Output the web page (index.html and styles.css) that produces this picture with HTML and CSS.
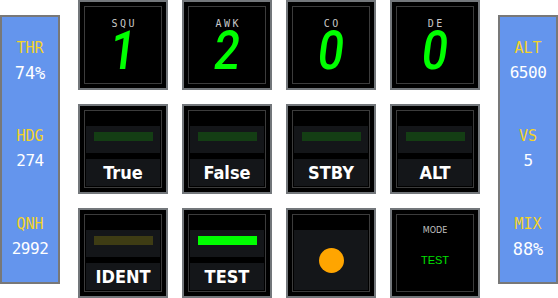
FILE: index.html
```html
<!DOCTYPE html>
<html lang="en">
<head>
    <meta charset="UTF-8">
    <meta name="viewport" content="width=device-width, initial-scale=1.0">
    <title>Transponder Panel</title>
    <link rel="stylesheet" href="styles.css">
</head>
<body>
    <div class="panel">
        <div class="readout"><span class="tag">THR</span><span class="val">74%</span></div>
        <div class="readout"><span class="tag">HDG</span><span class="val seg">274</span></div>
        <div class="readout"><span class="tag">QNH</span><span class="val seg">2992</span></div>
    </div>

    <div class="keys">
        <div class="key"><div class="face"><span class="cap">SQU</span><span class="digit">1</span></div></div>
        <div class="key"><div class="face"><span class="cap">AWK</span><span class="digit">2</span></div></div>
        <div class="key"><div class="face"><span class="cap">CO</span><span class="digit">0</span></div></div>
        <div class="key"><div class="face"><span class="cap">DE</span><span class="digit">0</span></div></div>

        <div class="key"><div class="face split"><div class="lamp"><span class="bar"></span></div><div class="label">True</div></div></div>
        <div class="key"><div class="face split"><div class="lamp"><span class="bar"></span></div><div class="label">False</div></div></div>
        <div class="key"><div class="face split"><div class="lamp"><span class="bar"></span></div><div class="label">STBY</div></div></div>
        <div class="key"><div class="face split"><div class="lamp"><span class="bar"></span></div><div class="label">ALT</div></div></div>

        <div class="key"><div class="face split"><div class="lamp"><span class="bar ident"></span></div><div class="label">IDENT</div></div></div>
        <div class="key"><div class="face split"><div class="lamp"><span class="bar on"></span></div><div class="label">TEST</div></div></div>
        <div class="key"><div class="face split"><div class="lamp tall"><span class="dot"></span></div></div></div>
        <div class="key"><div class="face mode"><span class="mode-cap">MODE</span><span class="mode-val">TEST</span></div></div>
    </div>

    <div class="panel">
        <div class="readout"><span class="tag">ALT</span><span class="val seg">6500</span></div>
        <div class="readout"><span class="tag">VS</span><span class="val seg">5</span></div>
        <div class="readout"><span class="tag">MIX</span><span class="val">88%</span></div>
    </div>
</body>
</html>
```

FILE: styles.css
```css
body {
    margin: 0;
    padding: 0;
    background: #ffffff;
    font-family: 'DejaVu Sans Mono', monospace;
    display: flex;
    align-items: center;
    justify-content: space-between;
    width: 558px;
    height: 298px;
}
.panel {
    box-sizing: border-box;
    width: 60px;
    height: 269px;
    background: #6495ed;
    border: 2px solid #787878;
    display: flex;
    flex-direction: column;
    justify-content: space-around;
    align-items: center;
}
.readout {
    display: flex;
    flex-direction: column;
    align-items: center;
    gap: 8px;
}
.tag {
    color: #f5d327;
    font-size: 15px;
    line-height: 16px;
}
.val {
    color: #ffffff;
    font-size: 17px;
    line-height: 18px;
}
.val.seg {
    font-size: 16px;
    letter-spacing: -0.5px;
}
.keys {
    display: grid;
    grid-template-columns: repeat(4, 90px);
    grid-template-rows: repeat(3, 90px);
    gap: 14px;
}
.key {
    box-sizing: border-box;
    border: 2px solid #73777b;
    background: #000000;
    padding: 4px;
}
.face {
    box-sizing: border-box;
    height: 100%;
    border: 1px solid #3c3c3c;
    display: flex;
    flex-direction: column;
    align-items: center;
}
.cap {
    margin-top: 12px;
    color: #c8c8c8;
    font-size: 10px;
    line-height: 9px;
    letter-spacing: 2.5px;
    margin-right: -2.5px;
}
.digit {
    margin-top: 2px;
    color: #00ff00;
    font-family: Roboto, sans-serif;
    font-weight: 500;
    font-size: 54px;
    line-height: 42px;
    transform: skewX(-7deg) scaleX(0.85);
}
.split {
    padding: 15px 1px 1px;
}
.lamp {
    box-sizing: border-box;
    width: 100%;
    height: 27px;
    background: #141619;
    padding-top: 6px;
    display: flex;
    justify-content: center;
}
.lamp.tall {
    height: 100%;
    padding-top: 0;
    align-items: center;
}
.bar {
    width: 59px;
    height: 9px;
    background: #143e14;
}
.bar.ident {
    background: #3e3c14;
}
.bar.on {
    background: #00ff00;
}
.dot {
    width: 25px;
    height: 25px;
    border-radius: 50%;
    background: #ffa500;
}
.label {
    width: 100%;
    height: 27px;
    margin-top: 6px;
    background: #141619;
    color: #ffffff;
    font-family: 'DejaVu Sans', sans-serif;
    font-stretch: condensed;
    font-weight: bold;
    font-size: 18px;
    line-height: 27px;
    text-align: center;
}
.mode-cap {
    margin-top: 11px;
    color: #c0c0c0;
    font-family: 'DejaVu Sans', sans-serif;
    font-size: 8px;
    line-height: 9px;
}
.mode-val {
    margin-top: 20px;
    color: #00e000;
    font-family: 'Liberation Sans', sans-serif;
    font-size: 11px;
    line-height: 11px;
}
```
